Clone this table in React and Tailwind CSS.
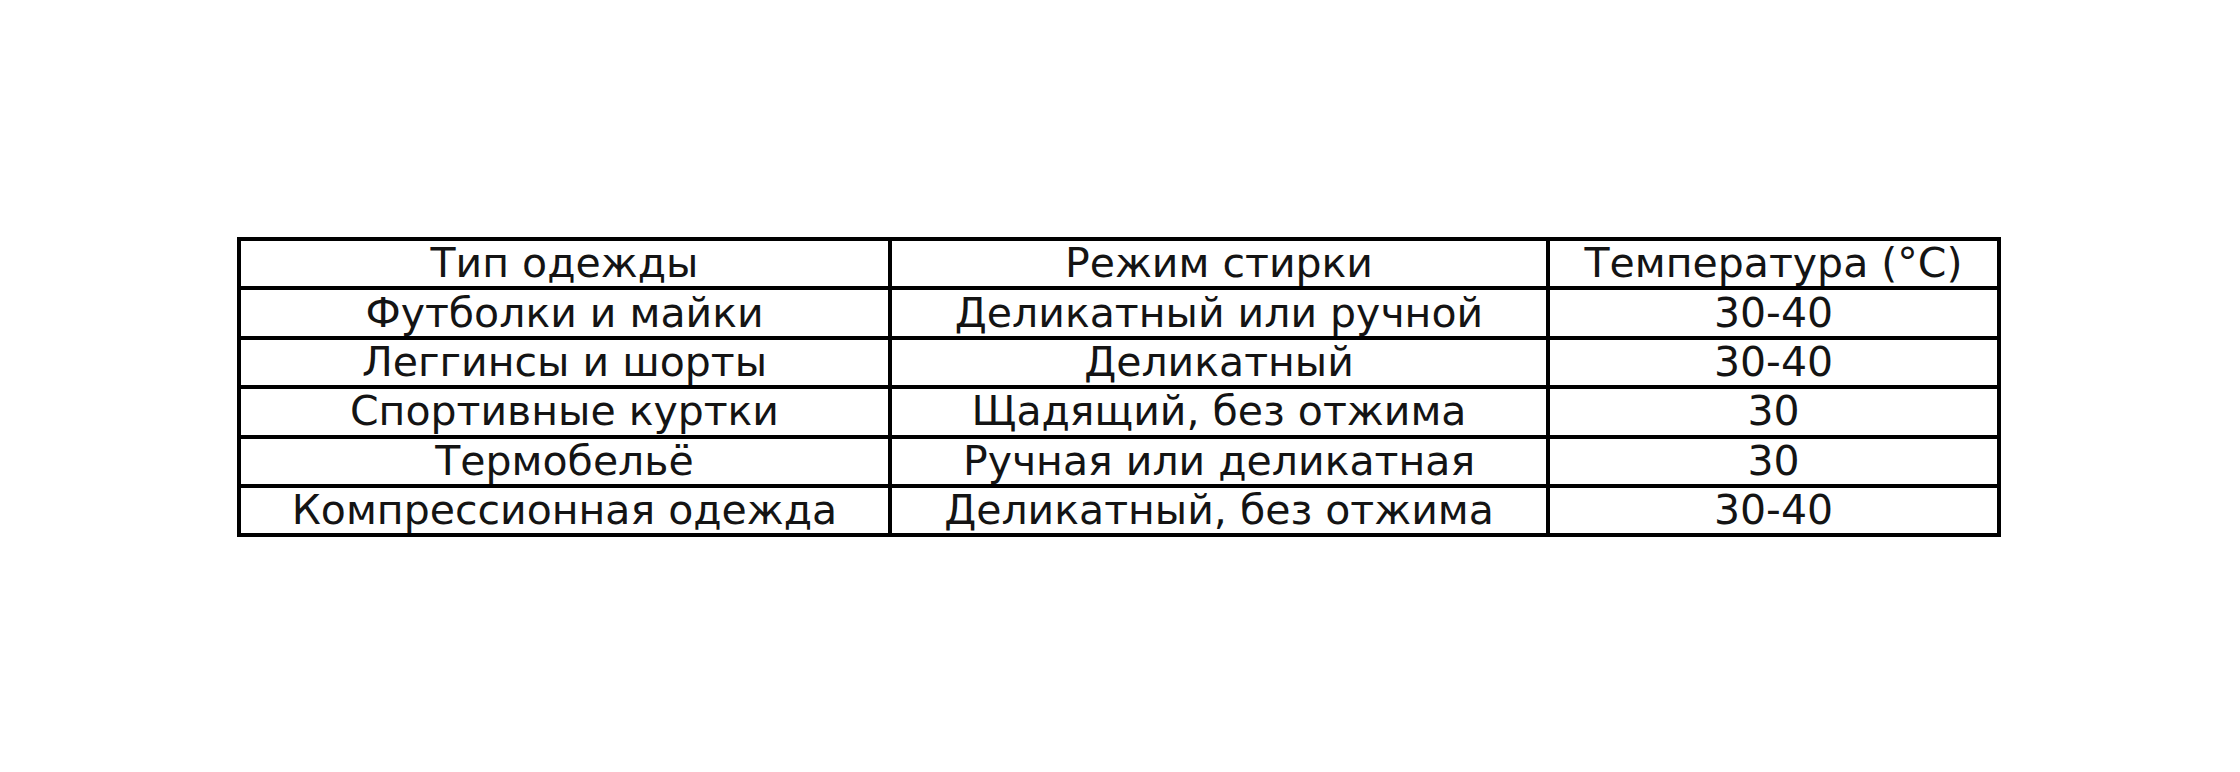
const headers = ["Тип одежды", "Режим стирки", "Температура (°C)"];

const rows = [
  ["Футболки и майки", "Деликатный или ручной", "30-40"],
  ["Леггинсы и шорты", "Деликатный", "30-40"],
  ["Спортивные куртки", "Щадящий, без отжима", "30"],
  ["Термобельё", "Ручная или деликатная", "30"],
  ["Компрессионная одежда", "Деликатный, без отжима", "30-40"],
];

function Cell({ children }) {
  return (
    <div className="h-[49.4px] border-r-4 border-b-4 border-black flex items-center justify-center text-[41px] leading-[45px] text-[#141414] whitespace-nowrap">
      {children}
    </div>
  );
}

export default function App() {
  return (
    <div
      className="w-[2240px] h-[772px] bg-white overflow-hidden pt-[237px] pl-[237px]"
      style={{ fontFamily: '"DejaVu Sans", sans-serif' }}
    >
      <div className="grid grid-cols-[651px_658px_451px] w-max border-l-4 border-t-4 border-black">
        {headers.map((h) => (
          <Cell key={h}>{h}</Cell>
        ))}
        {rows.map((row) =>
          row.map((value, i) => <Cell key={row[0] + i}>{value}</Cell>)
        )}
      </div>
    </div>
  );
}
